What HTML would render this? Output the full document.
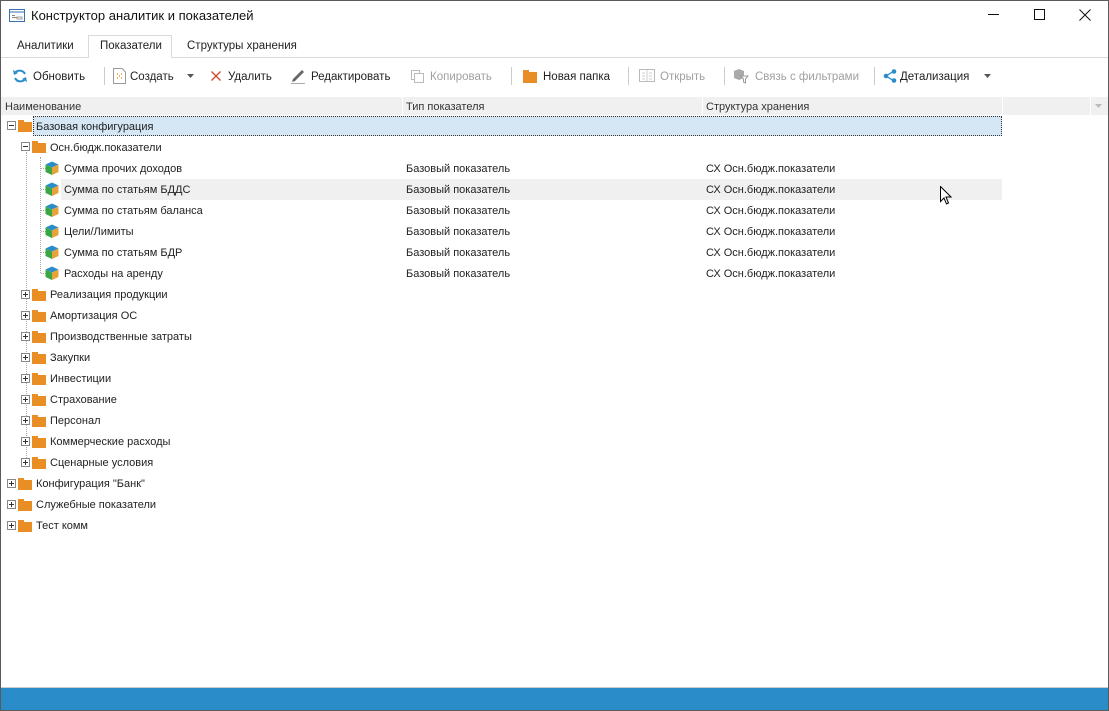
<!DOCTYPE html>
<html><head><meta charset="utf-8"><style>
*{margin:0;padding:0;box-sizing:border-box}
body{width:1109px;height:711px;overflow:hidden;background:#fff;font-family:"Liberation Sans",sans-serif;font-size:11px;color:#222;position:relative}
.a{position:absolute;white-space:nowrap}
div.a:not(:empty){margin-top:1px}
.win{position:absolute;left:0;top:0;width:1109px;height:711px;border:1px solid #5a5a5a}
.tb span{position:absolute;top:71px;font-size:11.5px}
.dis{color:#a0a0a0}
.sep{position:absolute;top:67px;width:1px;height:18px;background:#ccc}
.f{position:absolute;width:14px;height:10px;background:#e88e25}
.f:before{content:"";position:absolute;left:0;top:-2px;width:6px;height:3px;background:#e88e25}
.ex{position:absolute;width:9px;height:9px;border:1px solid #888;background:#fff}
.ex:before{content:"";position:absolute;left:1px;top:3px;width:5px;height:1px;background:#333}
.ex.p:after{content:"";position:absolute;left:3px;top:1px;width:1px;height:5px;background:#333}
.c{position:absolute;width:14px;height:14px}
</style></head><body>
<div class="win"></div>
<svg class="a" style="left:9px;top:9px" width="16" height="13"><rect x="0.5" y="0.5" width="15" height="12" fill="#fff" stroke="#3a6fb0"/><line x1="1" y1="3" x2="15" y2="3" stroke="#3a6fb0"/><rect x="3" y="6" width="3" height="1" fill="#888"/><rect x="3" y="8" width="5" height="1" fill="#888"/><rect x="8" y="8" width="5" height="2" fill="none" stroke="#888" stroke-width=".8"/></svg>
<div class="a" style="left:31px;top:7px;font-size:13px;color:#111">Конструктор аналитик и показателей</div>
<div class="a" style="left:988px;top:14px;width:11px;height:1px;background:#111"></div>
<div class="a" style="left:1034px;top:9px;width:11px;height:11px;border:1px solid #111"></div>
<svg class="a" style="left:1079px;top:9px" width="12" height="12"><path d="M0.5 0.5L11.5 11.5M11.5 0.5L0.5 11.5" stroke="#111"/></svg>
<div class="a" style="left:1px;top:57px;width:1107px;height:1px;background:#dadada"></div>
<div class="a" style="left:88px;top:35px;width:84px;height:23px;background:#fff;border:1px solid #dadada;border-bottom:none"></div>
<div class="a" style="left:17px;top:39px;font-size:11.5px">Аналитики</div>
<div class="a" style="left:100px;top:39px;font-size:11.5px">Показатели</div>
<div class="a" style="left:187px;top:39px;font-size:11.5px">Структуры хранения</div>
<div class="tb">
<svg class="a" style="left:12px;top:68px" width="16" height="16"><path d="M13 6A6 6 0 0 0 2.5 5.5M3 10A6 6 0 0 0 13.5 10.5" stroke="#2a8dca" stroke-width="2" fill="none"/><path d="M1 2L2 7L6 5Z M15 14L14 9L10 11Z" fill="#2a8dca"/></svg>
<span style="left:33px">Обновить</span>
<div class="sep" style="left:104px"></div>
<svg class="a" style="left:113px;top:68px" width="13" height="16"><path d="M.5 .5H9L12.5 4V15.5H.5Z" fill="#fff" stroke="#999"/><path d="M4 6h1M8 6h1M4 10h1M8 10h1M6 8h1" stroke="#e88e25" stroke-width="1.5"/></svg>
<span style="left:130px">Создать</span>
<svg class="a" style="left:187px;top:74px" width="7" height="4"><path d="M0 0H7L3.5 4Z" fill="#555"/></svg>
<svg class="a" style="left:211px;top:71px" width="10" height="10"><path d="M.5 .5L9.5 9.5M9.5 .5L.5 9.5" stroke="#d0482b" stroke-width="1.3"/></svg>
<span style="left:228px">Удалить</span>
<svg class="a" style="left:290px;top:68px" width="16" height="16"><path d="M2 14L3 11L12 2L14 4L5 13Z" fill="#666"/><path d="M1 15.5H15" stroke="#aaa"/></svg>
<span style="left:311px">Редактировать</span>
<svg class="a" style="left:411px;top:70px" width="13" height="13"><rect x=".5" y=".5" width="8" height="9" fill="none" stroke="#bbb"/><rect x="3.5" y="3.5" width="9" height="9" fill="#fff" stroke="#bbb"/></svg>
<span class="dis" style="left:430px">Копировать</span>
<div class="sep" style="left:511px"></div>
<div class="f" style="left:523px;top:72px;height:11px"></div>
<span style="left:543px">Новая папка</span>
<div class="sep" style="left:628px"></div>
<svg class="a" style="left:639px;top:69px" width="16" height="13"><rect x=".5" y=".5" width="15" height="12" fill="#fff" stroke="#bbb"/><path d="M8 1v11M3 4h3M3 7h3M3 10h3M10 4h3M10 7h3M10 10h3" stroke="#ccc"/></svg>
<span class="dis" style="left:660px">Открыть</span>
<div class="sep" style="left:724px"></div>
<svg class="a" style="left:733px;top:68px" width="16" height="16"><path d="M1 3L6 1L11 3V10L6 12L1 10Z" fill="#aaa"/><path d="M8 8H15L12.5 11V15L10.5 14V11Z" fill="#fff" stroke="#999"/></svg>
<span class="dis" style="left:755px">Связь с фильтрами</span>
<div class="sep" style="left:874px"></div>
<svg class="a" style="left:883px;top:69px" width="14" height="14"><path d="M11 2L3 7L11 12" stroke="#2a8dca" stroke-width="1.3" fill="none"/><circle cx="11" cy="2.5" r="2.3" fill="#2a8dca"/><circle cx="3" cy="7" r="2.3" fill="#2a8dca"/><circle cx="11" cy="11.5" r="2.3" fill="#2a8dca"/></svg>
<span style="left:900px">Детализация</span>
<svg class="a" style="left:984px;top:74px" width="7" height="4"><path d="M0 0H7L3.5 4Z" fill="#555"/></svg>
</div>
<div class="a" style="left:1px;top:97px;width:1107px;height:18px;background:#f0f0f0"></div>
<div class="a" style="left:402px;top:97px;width:1px;height:18px;background:#fff"></div>
<div class="a" style="left:702px;top:97px;width:1px;height:18px;background:#fff"></div>
<div class="a" style="left:1002px;top:97px;width:1px;height:18px;background:#fff"></div>
<div class="a" style="left:1090px;top:97px;width:1px;height:18px;background:#fff"></div>
<div class="a" style="left:5px;top:100px;color:#333">Наименование</div>
<div class="a" style="left:406px;top:100px;color:#333">Тип показателя</div>
<div class="a" style="left:706px;top:100px;color:#333">Структура хранения</div>
<svg class="a" style="left:1095px;top:104px" width="7" height="4"><path d="M0 0H7L3.5 4Z" fill="#bbb"/></svg>
<div class="a" style="left:33px;top:116px;width:969px;height:20px;background:#d5e7f5;border:1px dotted #333"></div>
<div class="a" style="left:61px;top:179px;width:941px;height:21px;background:#f0f0f0"></div>
<div class="a" style="left:26px;top:152px;width:0;height:310px;border-left:1px dotted #aaa"></div>
<div class="a" style="left:40px;top:157px;width:0;height:116px;border-left:1px dotted #aaa"></div>
<div class="a" style="left:36px;top:120px">Базовая конфигурация</div>
<div class="ex" style="left:7px;top:121px"></div><div class="f" style="left:18px;top:122px"></div>
<div class="a" style="left:50px;top:141px">Осн.бюдж.показатели</div>
<div class="ex" style="left:21px;top:142px"></div><div class="f" style="left:32px;top:143px"></div>

<svg width="0" height="0" style="position:absolute"><defs><g id="cube"><path d="M7 0.5L13.5 3.5L7 6.5L0.5 3.5Z" fill="#2a8dca"/><path d="M0.5 3.5L7 6.5V14L0.5 11Z" fill="#3aa745"/><path d="M13.5 3.5L7 6.5V14L13.5 11Z" fill="#e8a23a"/></g></defs></svg>

<div class="a" style="left:41px;top:168px;width:5px;border-top:1px dotted #aaa"></div><svg class="c" style="left:45px;top:161px"><use href="#cube"/></svg>
<div class="a" style="left:64px;top:162px">Сумма прочих доходов</div><div class="a" style="left:406px;top:162px">Базовый показатель</div><div class="a" style="left:706px;top:162px">СХ Осн.бюдж.показатели</div>
<div class="a" style="left:41px;top:189px;width:5px;border-top:1px dotted #aaa"></div><svg class="c" style="left:45px;top:182px"><use href="#cube"/></svg>
<div class="a" style="left:64px;top:183px">Сумма по статьям БДДС</div><div class="a" style="left:406px;top:183px">Базовый показатель</div><div class="a" style="left:706px;top:183px">СХ Осн.бюдж.показатели</div>
<div class="a" style="left:41px;top:210px;width:5px;border-top:1px dotted #aaa"></div><svg class="c" style="left:45px;top:203px"><use href="#cube"/></svg>
<div class="a" style="left:64px;top:204px">Сумма по статьям баланса</div><div class="a" style="left:406px;top:204px">Базовый показатель</div><div class="a" style="left:706px;top:204px">СХ Осн.бюдж.показатели</div>
<div class="a" style="left:41px;top:231px;width:5px;border-top:1px dotted #aaa"></div><svg class="c" style="left:45px;top:224px"><use href="#cube"/></svg>
<div class="a" style="left:64px;top:225px">Цели/Лимиты</div><div class="a" style="left:406px;top:225px">Базовый показатель</div><div class="a" style="left:706px;top:225px">СХ Осн.бюдж.показатели</div>
<div class="a" style="left:41px;top:252px;width:5px;border-top:1px dotted #aaa"></div><svg class="c" style="left:45px;top:245px"><use href="#cube"/></svg>
<div class="a" style="left:64px;top:246px">Сумма по статьям БДР</div><div class="a" style="left:406px;top:246px">Базовый показатель</div><div class="a" style="left:706px;top:246px">СХ Осн.бюдж.показатели</div>
<div class="a" style="left:41px;top:273px;width:5px;border-top:1px dotted #aaa"></div><svg class="c" style="left:45px;top:266px"><use href="#cube"/></svg>
<div class="a" style="left:64px;top:267px">Расходы на аренду</div><div class="a" style="left:406px;top:267px">Базовый показатель</div><div class="a" style="left:706px;top:267px">СХ Осн.бюдж.показатели</div>

<div class="ex p" style="left:21px;top:290px"></div><div class="f" style="left:32px;top:291px"></div><div class="a" style="left:50px;top:288px">Реализация продукции</div>
<div class="ex p" style="left:21px;top:311px"></div><div class="f" style="left:32px;top:312px"></div><div class="a" style="left:50px;top:309px">Амортизация ОС</div>
<div class="ex p" style="left:21px;top:332px"></div><div class="f" style="left:32px;top:333px"></div><div class="a" style="left:50px;top:330px">Производственные затраты</div>
<div class="ex p" style="left:21px;top:353px"></div><div class="f" style="left:32px;top:354px"></div><div class="a" style="left:50px;top:351px">Закупки</div>
<div class="ex p" style="left:21px;top:374px"></div><div class="f" style="left:32px;top:375px"></div><div class="a" style="left:50px;top:372px">Инвестиции</div>
<div class="ex p" style="left:21px;top:395px"></div><div class="f" style="left:32px;top:396px"></div><div class="a" style="left:50px;top:393px">Страхование</div>
<div class="ex p" style="left:21px;top:416px"></div><div class="f" style="left:32px;top:417px"></div><div class="a" style="left:50px;top:414px">Персонал</div>
<div class="ex p" style="left:21px;top:437px"></div><div class="f" style="left:32px;top:438px"></div><div class="a" style="left:50px;top:435px">Коммерческие расходы</div>
<div class="ex p" style="left:21px;top:458px"></div><div class="f" style="left:32px;top:459px"></div><div class="a" style="left:50px;top:456px">Сценарные условия</div>
<div class="ex p" style="left:7px;top:479px"></div><div class="f" style="left:18px;top:480px"></div><div class="a" style="left:36px;top:477px">Конфигурация "Банк"</div>
<div class="ex p" style="left:7px;top:500px"></div><div class="f" style="left:18px;top:501px"></div><div class="a" style="left:36px;top:498px">Служебные показатели</div>
<div class="ex p" style="left:7px;top:521px"></div><div class="f" style="left:18px;top:522px"></div><div class="a" style="left:36px;top:519px">Тест комм</div>
<svg class="a" style="left:940px;top:186px" width="12" height="19"><path d="M.5 .5V15.5L4 12L6.5 18L8.5 17L6 11H11Z" fill="#fff" stroke="#000"/></svg>
<div class="a" style="left:1px;top:687px;width:1107px;height:1px;background:#ccc"></div>
<div class="a" style="left:1px;top:688px;width:1107px;height:22px;background:#2a8dca"></div>
</body></html>
